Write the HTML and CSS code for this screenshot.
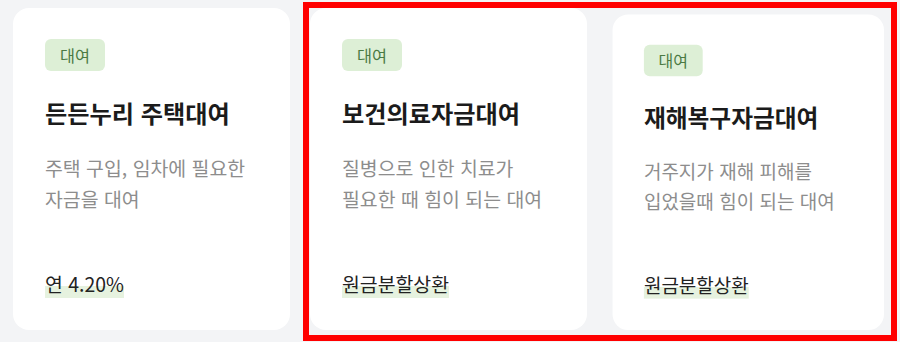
FILE: index.html
```html
<!DOCTYPE html>
<html lang="ko">
<head>
<meta charset="utf-8">
<title>대여 상품</title>
<link rel="stylesheet" href="styles.css">
</head>
<body>
<div class="cards">
  <div class="card">
    <span class="badge">대여</span>
    <h2 class="title">든든누리 주택대여</h2>
    <p class="desc">주택 구입, 임차에 필요한<br>자금을 대여</p>
    <div class="foot"><span class="mark">연 4.20%</span></div>
  </div>
  <div class="card">
    <span class="badge">대여</span>
    <h2 class="title">보건의료자금대여</h2>
    <p class="desc">질병으로 인한 치료가<br>필요한 때 힘이 되는 대여</p>
    <div class="foot"><span class="mark">원금분할상환</span></div>
  </div>
  <div class="card card-hover">
    <span class="badge">대여</span>
    <h2 class="title">재해복구자금대여</h2>
    <p class="desc">거주지가 재해 피해를<br>입었을때 힘이 되는 대여</p>
    <div class="foot"><span class="mark">원금분할상환</span></div>
  </div>
</div>
<div class="highlight-box"></div>
</body>
</html>
```

FILE: styles.css
```css
html, body {
  margin: 0;
  padding: 0;
}
body {
  width: 900px;
  height: 342px;
  overflow: hidden;
  background: #f3f4f6;
  font-family: "Noto Sans CJK KR", "Noto Sans", sans-serif;
  position: relative;
}
.cards {
  display: flex;
  gap: 20px;
  padding: 8px 0 0 13px;
}
.card {
  box-sizing: border-box;
  width: 277px;
  height: 322px;
  background: #ffffff;
  border-radius: 16px;
  padding: 31px 32px 33px;
  display: flex;
  flex-direction: column;
  align-items: flex-start;
}
.card-hover {
  transform-origin: right bottom;
  transform: scale(0.98);
}
.badge {
  display: inline-block;
  height: 32px;
  line-height: 32px;
  padding: 0 15px;
  border-radius: 6px;
  background: #ddefd6;
  color: #4b7a44;
  font-size: 16.3px;
}
.title {
  margin: 27px 0 0;
  font-size: 24.2px;
  line-height: 30px;
  font-weight: 700;
  color: #1b1b1b;
}
.desc {
  margin: 24px 0 0;
  font-size: 19.4px;
  line-height: 31px;
  color: #8d8d8d;
}
.foot {
  margin-top: auto;
  font-size: 19.4px;
  line-height: 26px;
  color: #222222;
}
.mark {
  background: linear-gradient(transparent 58%, #e6f2df 58%);
}
.highlight-box {
  position: absolute;
  left: 303px;
  top: 2px;
  width: 594px;
  height: 339px;
  box-sizing: border-box;
  border: 6px solid #ff0000;
  pointer-events: none;
}
```
